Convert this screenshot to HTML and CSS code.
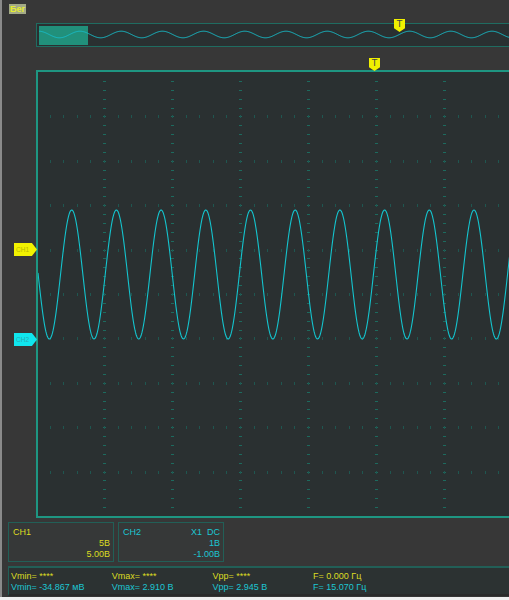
FILE: index.html
```html
<!DOCTYPE html>
<html lang="ru">
<head>
  <meta charset="utf-8"/>
  <meta name="viewport" content="width=device-width, initial-scale=1.0"/>
  <title>Осциллограф</title>
  <link rel="stylesheet" href="styles.css">
</head>
<body>
<div class="app">

  <!-- Режим запуска -->
  <div class="topbar"><span class="mode-label">Бег</span></div>

  <!-- Обзор буфера -->
  <div class="overview">
    <svg class="overview-svg" id="overviewSvg" width="698" height="22"></svg>
    <div class="trig-mark overview-trig">T</div>
  </div>

  <!-- Экран -->
  <div class="screen">
    <svg class="screen-svg" id="screenSvg" width="696" height="444"></svg>
    <div class="trig-mark screen-trig">T</div>
    <div class="ch-mark ch1-mark">CH1</div>
    <div class="ch-mark ch2-mark">CH2</div>
  </div>

  <!-- Каналы -->
  <div class="channels">
    <div class="ch-panel ch1">
      <div class="ch-row"><span>CH1</span></div>
      <div class="ch-row end">5В</div>
      <div class="ch-row end">5.00В</div>
    </div>
    <div class="ch-panel ch2">
      <div class="ch-row"><span>CH2</span><span class="coupling">X1&nbsp;&nbsp;DC</span></div>
      <div class="ch-row end">1В</div>
      <div class="ch-row end">-1.00В</div>
    </div>
  </div>

  <!-- Измерения -->
  <div class="measures">
    <div class="m-row yellow">
      <span>Vmin= ****</span>
      <span>Vmax= ****</span>
      <span>Vpp= ****</span>
      <span>F= 0.000 Гц</span>
    </div>
    <div class="m-row cyan">
      <span>Vmin= -34.867 мВ</span>
      <span>Vmax= 2.910 В</span>
      <span>Vpp= 2.945 В</span>
      <span>F= 15.070 Гц</span>
    </div>
  </div>
</div>

<script src="app.js"></script>
</body>
</html>
```

FILE: styles.css
```css
/* -------------------- Couleurs -------------------- */
:root {
  --bg: #373737;
  --screen-bg: #2a3031;
  --teal: #1e9682;
  --teal-dim: #225f57;
  --yellow: #dcdc22;
  --cyan: #1cc6d2;
}

/* -------------------- Base -------------------- */
* { box-sizing: border-box; }
html, body {
  margin: 0;
  padding: 0;
  background: #f0f0f0;
  overflow: hidden;
  font-family: "Liberation Sans", Arial, sans-serif;
  font-size: 9px;
}
.app {
  height: 597px;
  background: var(--bg);
  border-left: 2px solid #8a8a8a;
  overflow: hidden;
}

/* -------------------- Barre du haut -------------------- */
.topbar {
  height: 23px;
  padding: 4px 0 0 7px;
}
.mode-label {
  display: inline-block;
  height: 10px;
  padding: 0 1px;
  line-height: 10px;
  font-weight: 700;
  color: #e6ee30;
  background: #a3aa86;
}

/* -------------------- Vue d'ensemble -------------------- */
.overview {
  position: relative;
  width: 700px;
  height: 24px;
  margin: 0 0 23px 34px;
  border: 1px solid #1f6c61;
  background: var(--screen-bg);
}
.overview-svg { display: block; }

/* -------------------- Ecran -------------------- */
.screen {
  position: relative;
  width: 700px;
  height: 448px;
  margin-left: 34px;
  border: 2px solid var(--teal);
  background: var(--screen-bg);
}
.screen-svg { display: block; }

/* marqueur de déclenchement */
.trig-mark {
  position: absolute;
  width: 11px;
  height: 13px;
  padding-top: 1px;
  background: #f0f000;
  clip-path: polygon(0 0, 100% 0, 100% 72%, 50% 100%, 0 72%);
  color: #444;
  font-family: "DejaVu Sans", sans-serif;
  font-size: 9px;
  line-height: 9px;
  text-align: center;
}
.overview-trig { left: 357px; top: -5px; }
.screen-trig { left: 331px; top: -14px; }

/* marqueurs de canal */
.ch-mark {
  position: absolute;
  left: -24px;
  width: 23px;
  height: 13px;
  padding-left: 2px;
  clip-path: polygon(0 0, 78% 0, 100% 50%, 78% 100%, 0 100%);
  font-size: 6.5px;
  line-height: 13px;
}
.ch1-mark { top: 171px; background: #f2f200; color: #b8b800; }
.ch2-mark { top: 261px; background: #10e6ee; color: #2aa9b2; }

/* -------------------- Panneaux canaux -------------------- */
.channels {
  display: flex;
  gap: 4px;
  margin: 4px 0 0 6px;
}
.ch-panel {
  width: 106px;
  height: 40px;
  padding: 4px 3px 0 4px;
  border: 1px solid var(--teal-dim);
  background: #363838;
}
.ch-row {
  display: flex;
  justify-content: space-between;
  height: 11px;
  line-height: 11px;
}
.ch-row.end { justify-content: flex-end; }
.ch1 { color: var(--yellow); }
.ch2 { color: var(--cyan); }

/* -------------------- Mesures -------------------- */
.measures {
  height: 30px;
  margin: 4px 0 0 6px;
  padding: 3px 0 0 2px;
  border-top: 2px solid var(--teal-dim);
  border-left: 1px solid var(--teal-dim);
  border-bottom: 2px solid #2a2a2a;
  background: #2c3232;
}
.m-row {
  display: grid;
  grid-template-columns: repeat(4, 100.7px);
  height: 11px;
  line-height: 11px;
  white-space: nowrap;
}
.m-row.yellow { color: var(--yellow); }
.m-row.cyan { color: var(--cyan); }
```

FILE: app.js
```js
const NS = 'http://www.w3.org/2000/svg';

function add(svg, name, attrs) {
  const node = document.createElementNS(NS, name);
  for (const k in attrs) node.setAttribute(k, attrs[k]);
  svg.appendChild(node);
  return node;
}

function sinePoints(x0, x1, mid, amp, peakX, period) {
  const pts = [];
  for (let x = x0; x <= x1; x += 0.5) {
    const y = mid - amp * Math.cos(2 * Math.PI * (x - peakX) / period);
    pts.push(x.toFixed(1) + ',' + y.toFixed(2));
  }
  return pts.join(' ');
}

// ---- grille de l'écran (origine = coin intérieur 38,72) ----
const screen = document.getElementById('screenSvg');
const divX = 68, divY = 44.4;

for (let k = 1; k <= 10; k++) {
  const x = -2 + divX * k;
  for (let i = 1; i < 50; i++) {
    const y = Math.round(divY / 5 * i);
    add(screen, 'rect', { x: x - 1, y: y, width: 3, height: 1, fill: '#1d6a5e' });
  }
}
for (let j = 1; j <= 9; j++) {
  const y = Math.round(divY * j);
  for (let i = 1; i < 52; i++) {
    const x = Math.round(-2 + divX / 5 * i);
    add(screen, 'rect', { x: x, y: y - 1, width: 1, height: 3, fill: '#1f5650' });
  }
}

// signal CH2
add(screen, 'polyline', {
  points: sinePoints(0, 480, 202.5, 64.5, 71.7 - 38, 44.7),
  fill: 'none', stroke: '#14c4ce', 'stroke-width': 1.1
});

// ---- vue d'ensemble (origine = 37,24) ----
const overview = document.getElementById('overviewSvg');
add(overview, 'rect', { x: 2, y: 2, width: 49, height: 19, fill: '#21907b' });
add(overview, 'polyline', {
  points: sinePoints(2, 480, 10.5, 3.3, 80 - 37, 41.2),
  fill: 'none', stroke: '#18bcc8', 'stroke-width': 1
});
```
